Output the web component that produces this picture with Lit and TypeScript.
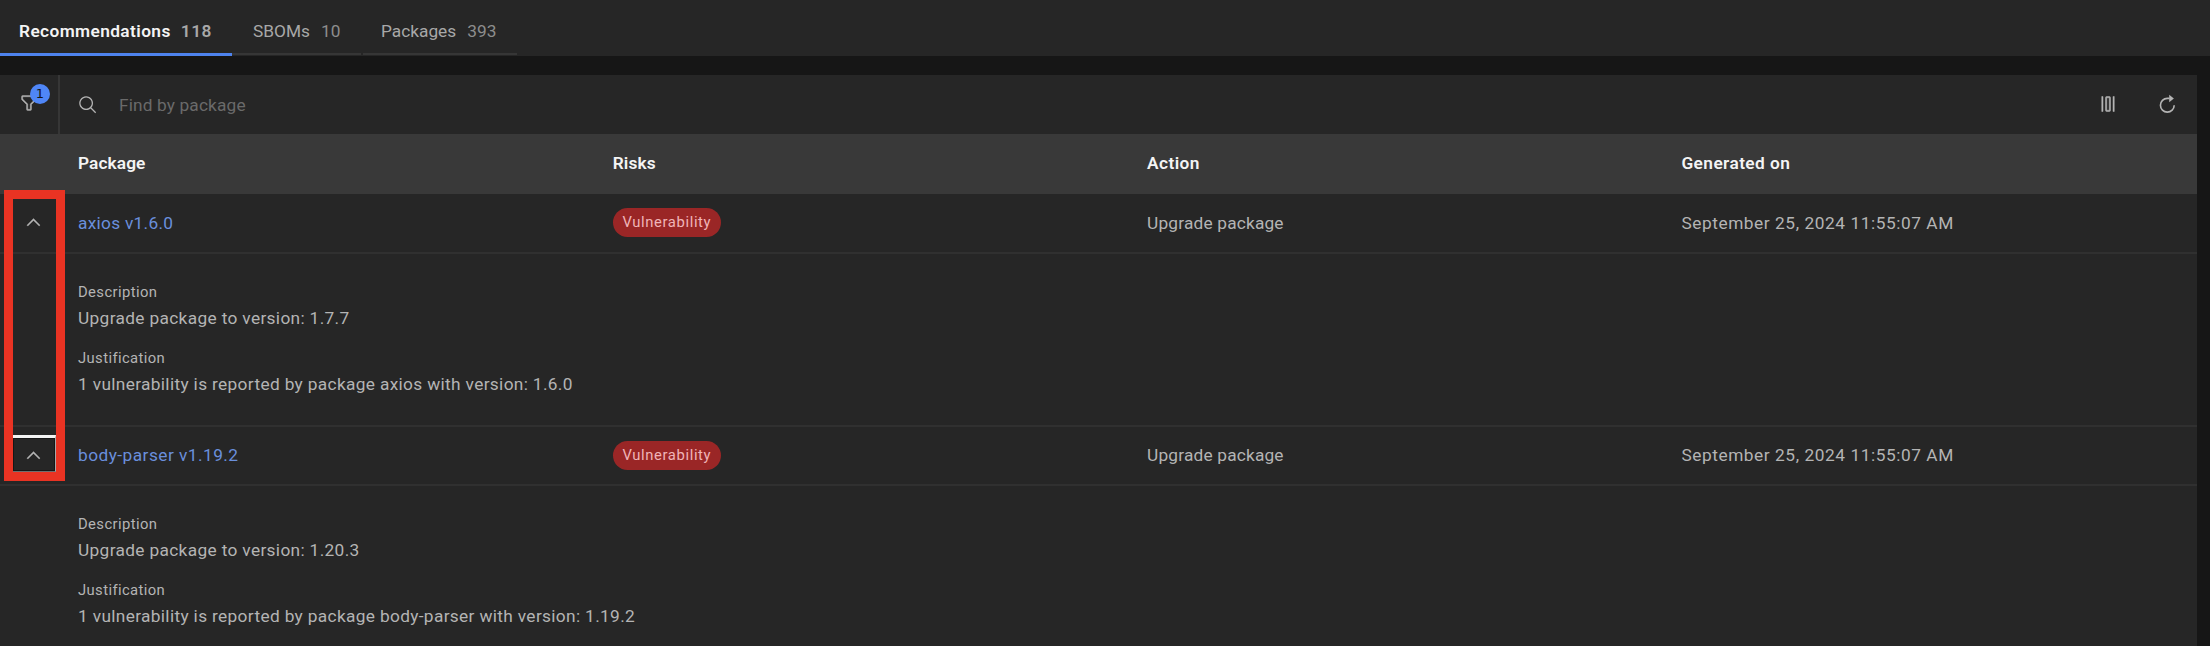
import { LitElement, html, css, svg } from "lit";
import { customElement } from "lit/decorators.js";

interface Recommendation {
  pkg: string;
  cls: string;
  description: string;
  justification: string;
}

const rows: Recommendation[] = [
  { pkg: "axios v1.6.0", cls: "first", description: "Upgrade package to version: 1.7.7", justification: "1 vulnerability is reported by package axios with version: 1.6.0" },
  { pkg: "body-parser v1.19.2", cls: "second", description: "Upgrade package to version: 1.20.3", justification: "1 vulnerability is reported by package body-parser with version: 1.19.2" },
];

const icon = (size: number, shape: unknown, cls = "") =>
  html`<svg class="icon ${cls}" width=${size} height=${size} viewBox="0 0 32 32">${shape}</svg>`;

const filterShape = svg`<path d="M18,28H14a2,2,0,0,1-2-2V18.41L4.59,11A2,2,0,0,1,4,9.59V6A2,2,0,0,1,6,4H26a2,2,0,0,1,2,2V9.59A2,2,0,0,1,27.41,11L20,18.41V26A2,2,0,0,1,18,28ZM6,6V9.59l8,8V26h4V17.59l8-8V6Z"/>`;
const searchShape = svg`<path d="M29,27.5859l-7.5521-7.5521a11.0177,11.0177,0,1,0-1.4141,1.4141L27.5859,29ZM4,13a9,9,0,1,1,9,9A9.01,9.01,0,0,1,4,13Z"/>`;
const columnShape = svg`<path d="M24 4H26V28H24zM6 4H8V28H6zM18,6V26H14V6h4m0-2H14a2,2,0,0,0-2,2V26a2,2,0,0,0,2,2h4a2,2,0,0,0,2-2V6a2,2,0,0,0-2-2Z"/>`;
const restartShape = svg`<path d="M20 7H16.5A11 11 0 1 0 27.5 18" fill="none" stroke="currentColor" stroke-width="2.6"/><path d="M19.5 1L27 7L19.5 13Z"/>`;
const chevronShape = svg`<path d="M16 10L26 20 24.6 21.4 16 12.8 7.4 21.4 6 20z"/>`;

@customElement("app-root")
export class AppRoot extends LitElement {
  static styles = css`
    :host {
      display: block;
      position: relative;
      height: 646px;
      overflow: hidden;
      background: #161616;
      color: #b4b4b4;
      font: 17.3px/22px Roboto, "Noto Sans", sans-serif;
      white-space: nowrap;
    }
    .icon { display: block; fill: currentColor; }
    .tabs { display: flex; gap: 2px; height: 56px; background: #262626; }
    .tab {
      box-sizing: border-box;
      height: 55px;
      padding: 20px 20px 0 18px;
      border-bottom: 2px solid #363636;
      display: flex;
      gap: 11px;
      color: #a8a8a8;
    }
    .count { color: #8d8d8d; }
    .tab.active { width: 232px; height: 56px; padding-left: 19px; gap: 10px; border-bottom: 3px solid #4e83ee; color: #f4f4f4; font-weight: 600; letter-spacing: 0.4px; margin-right: -2px; }
    .tab.active .count { color: #a8a8a8; letter-spacing: 0.6px; }
    .tab.sboms { width: 129px; padding-left: 21px; }
    .tab.packages { width: 154px; }
    .panel { margin-top: 19px; width: 2197px; background: #262626; }
    .toolbar { display: flex; height: 59px; align-items: center; }
    .filter { box-sizing: border-box; position: relative; width: 60px; height: 59px; border-right: 2px solid #363636; padding: 18px 0 0 19px; }
    .filter .icon { stroke: currentColor; stroke-width: 0.6; }
    .badge {
      position: absolute;
      left: 30px;
      top: 9px;
      width: 20px;
      height: 20px;
      border-radius: 50%;
      background: #4f86f7;
      color: #161616;
      font: 13px/20px "DejaVu Sans", sans-serif;
      text-align: center;
    }
    .search { display: flex; flex: 1; align-items: center; padding-left: 18px; gap: 21px; }
    .placeholder { color: #6a6a6a; letter-spacing: 0.14px; }
    .tools { display: flex; align-items: center; gap: 39px; padding: 0 20px 2px 0; }
    .columns { stroke: currentColor; stroke-width: 0.8; }
    .grid { display: grid; grid-template-columns: 60px repeat(4, 534.3px); align-items: center; }
    .cell { padding-left: 18.5px; }
    .link, .head .cell:nth-child(2) { padding-left: 18px; }
    .head { box-sizing: border-box; height: 60px; padding-bottom: 2px; background: #393939; color: #f4f4f4; font-weight: 600; letter-spacing: 0.1px; }
    .head .wide { letter-spacing: 0.42px; }
    .row { box-sizing: border-box; height: 60px; padding-bottom: 1px; border-bottom: 2px solid #303030; }
    .row.second { height: 59px; }
    .chevron { margin-left: 23px; stroke: currentColor; stroke-width: 0.6; }
    .link { color: #6a8fdc; letter-spacing: 0.28px; }
    .second .link { letter-spacing: 0.46px; }
    .action { letter-spacing: 0.18px; }
    .date { letter-spacing: 0.56px; }
    .tag {
      display: block;
      height: 29px;
      width: 108px;
      border-radius: 15px;
      background: #9a2626;
      color: #f0b4b8;
      font-size: 14.8px;
      line-height: 28px;
      letter-spacing: 0.62px;
      text-align: center;
    }
    .details { box-sizing: border-box; height: 173px; padding: 27px 0 0 78px; border-bottom: 2px solid #303030; }
    .label { font-size: 14.8px; line-height: 22px; letter-spacing: 0.4px; }
    .value { line-height: 22px; margin: 4px 0 18px; letter-spacing: 0.34px; }
    .highlight {
      box-sizing: border-box;
      position: absolute;
      left: 4px;
      top: 190px;
      width: 61px;
      height: 291px;
      border: 9px solid #e93323;
    }
    .focus {
      box-sizing: border-box;
      position: absolute;
      left: 0;
      right: 0;
      bottom: 0;
      height: 37px;
      border-top: 3px solid #f4f4f4;
      border-right: 1px solid #a8a8a8;
      border-bottom: 1px solid #6f6f6f;
      box-shadow: inset 0 0 0 1px #161616;
    }
  `;

  render() {
    return html`
      <div class="tabs">
        <div class="tab active"><span>Recommendations</span><span class="count">118</span></div>
        <div class="tab sboms"><span>SBOMs</span><span class="count">10</span></div>
        <div class="tab packages"><span>Packages</span><span class="count">393</span></div>
      </div>
      <div class="panel">
        <div class="toolbar">
          <div class="filter">${icon(20, filterShape)}<span class="badge">1</span></div>
          <div class="search">${icon(20, searchShape)}<span class="placeholder">Find by package</span></div>
          <div class="tools">${icon(20, columnShape, "columns")}${icon(20, restartShape)}</div>
        </div>
        <div class="grid head">
          <span></span>
          <span class="cell">Package</span><span class="cell">Risks</span><span class="cell wide">Action</span><span class="cell wide">Generated on</span>
        </div>
        ${rows.map(
          (r) => html`
            <div class="grid row ${r.cls}">
              ${icon(21, chevronShape, "chevron")}
              <span class="cell link">${r.pkg}</span>
              <span class="cell"><span class="tag">Vulnerability</span></span>
              <span class="cell action">Upgrade package</span>
              <span class="cell date">September 25, 2024 11:55:07 AM</span>
            </div>
            <div class="details">
              <div class="label">Description</div>
              <div class="value">${r.description}</div>
              <div class="label">Justification</div>
              <div class="value">${r.justification}</div>
            </div>
          `
        )}
      </div>
      <div class="highlight"><div class="focus"></div></div>
    `;
  }
}
